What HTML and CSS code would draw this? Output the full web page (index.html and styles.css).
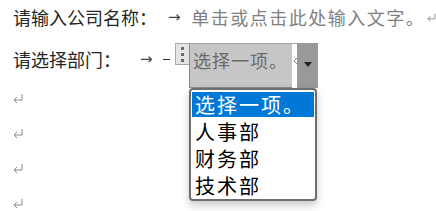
FILE: index.html
```html
<!DOCTYPE html>
<html lang="zh-CN">
<head>
    <meta charset="UTF-8">
    <meta name="viewport" content="width=device-width, initial-scale=1.0">
    <title>公司信息</title>
    <link rel="stylesheet" href="styles.css">
</head>
<body>

<div class="page">
    <div class="line line-company">
        <span class="label">请输入公司名称：</span>
        <span class="tab tab-company">→</span>
        <span class="placeholder">单击或点击此处输入文字。</span>
        <svg class="mark mark-end" width="10" height="9" viewBox="0 0 10 9"><path d="M9 0 V6 H1 M4 3 L1 6 L4 9" fill="none" stroke="#8a8a8a" stroke-width="1"/></svg>
    </div>

    <div class="line line-dept">
        <span class="label">请选择部门：</span>
        <span class="tab tab-dept">→</span>
        <span class="tab-cut"></span>
        <div class="combo">
            <span class="combo-handle"><i></i><i></i><i></i></span>
            <span class="combo-value">选择一项。</span>
            <span class="combo-gap">
                <svg width="5" height="8" viewBox="0 0 5 8"><path d="M4 1 L1 4 L4 7" fill="none" stroke="#8a8a8a" stroke-width="1"/></svg>
            </span>
            <span class="combo-button"><span class="caret"></span></span>

            <ul class="combo-list">
                <li class="selected">选择一项。</li>
                <li>人事部</li>
                <li>财务部</li>
                <li>技术部</li>
            </ul>
        </div>
    </div>

    <div class="line empty"><svg class="mark" width="10" height="9" viewBox="0 0 10 9"><path d="M9 0 V6 H1 M4 3 L1 6 L4 9" fill="none" stroke="#8a8a8a" stroke-width="1"/></svg></div>
    <div class="line empty"><svg class="mark" width="10" height="9" viewBox="0 0 10 9"><path d="M9 0 V6 H1 M4 3 L1 6 L4 9" fill="none" stroke="#8a8a8a" stroke-width="1"/></svg></div>
    <div class="line empty"><svg class="mark" width="10" height="9" viewBox="0 0 10 9"><path d="M9 0 V6 H1 M4 3 L1 6 L4 9" fill="none" stroke="#8a8a8a" stroke-width="1"/></svg></div>
    <div class="line empty"><svg class="mark" width="10" height="9" viewBox="0 0 10 9"><path d="M9 0 V6 H1 M4 3 L1 6 L4 9" fill="none" stroke="#8a8a8a" stroke-width="1"/></svg></div>
</div>

</body>
</html>
```

FILE: styles.css
```css
body {
    margin: 0;
    background: #ffffff;
    color: #262626;
    font-family: "Noto Sans CJK SC", "Noto Sans", sans-serif;
    font-size: 18px;
    overflow: hidden;
}
.page {
    padding-left: 13px;
}
.line {
    display: flex;
    white-space: nowrap;
}
.label {
    line-height: 22px;
}
.tab {
    display: inline-block;
    width: 15px;
    font-family: "DejaVu Sans", sans-serif;
    font-size: 15px;
    line-height: 22px;
    color: #444444;
}

/* first line */
.line-company {
    height: 34px;
    align-items: center;
}
.tab-company {
    margin-left: 11px;
}
.placeholder {
    margin-left: 10px;
    line-height: 22px;
    letter-spacing: 1.5px;
    color: #7f7f7f;
}
.mark-end {
    margin-left: 2px;
}

/* second line */
.line-dept {
    height: 47px;
    align-items: flex-start;
}
.line-dept .label,
.line-dept .tab {
    margin-top: 14px;
}
.tab-dept {
    margin-left: 19px;
}
.tab-cut {
    width: 7px;
    height: 1px;
    margin-top: 25px;
    margin-left: 8px;
    background: #333333;
}
.combo {
    position: relative;
    display: flex;
    margin-top: 9px;
    margin-left: 5px;
}
.combo-handle {
    display: flex;
    flex-direction: column;
    align-items: center;
    justify-content: center;
    gap: 3px;
    box-sizing: border-box;
    width: 14px;
    height: 22px;
    background: #e4e4e4;
    border: 1px solid #a8a8a8;
    border-right: none;
}
.combo-handle i {
    display: block;
    width: 3px;
    height: 3px;
    background: #6a6a6a;
}
.combo-value {
    box-sizing: border-box;
    width: 103px;
    height: 45px;
    padding: 5px 0 0 3px;
    line-height: 22px;
    letter-spacing: 1px;
    color: #6b6b6b;
    background: #c6c6c6;
    border-top: 1px solid #a8a8a8;
    border-left: 1px solid #8a8a8a;
    border-bottom: 1px solid #8a8a8a;
    overflow: hidden;
}
.combo-gap {
    box-sizing: border-box;
    width: 5px;
    height: 45px;
    padding-top: 13px;
    background: #ffffff;
    border-top: 1px solid #a8a8a8;
    overflow: hidden;
}
.combo-gap svg {
    display: block;
    margin-left: 1px;
}
.combo-button {
    display: flex;
    justify-content: center;
    box-sizing: border-box;
    width: 21px;
    height: 45px;
    padding-top: 19px;
    background: #999999;
}
.caret {
    width: 0;
    height: 0;
    border-left: 4px solid transparent;
    border-right: 4px solid transparent;
    border-top: 5px solid #222222;
}

/* open list */
.combo-list {
    position: absolute;
    left: 14px;
    top: 45px;
    box-sizing: border-box;
    width: 128px;
    height: 113px;
    margin: 0;
    padding: 2px 1px;
    list-style: none;
    background: #ffffff;
    border: 2px solid #6e6e6e;
    border-radius: 4px;
    box-shadow: 0 4px 9px rgba(0, 0, 0, 0.22);
    font-family: "Noto Sans CJK TC", "Noto Sans CJK SC", sans-serif;
    font-size: 20px;
    color: #000000;
}
.combo-list li {
    height: 27px;
    padding-left: 3px;
    line-height: 26px;
    letter-spacing: 2px;
}
.combo-list li.selected {
    height: 25px;
    margin-bottom: 2px;
    line-height: 25px;
    background: #0078d7;
    color: #ffffff;
}

/* empty paragraphs */
.empty {
    height: 35px;
    align-items: center;
}
.mark {
    display: block;
}
```
